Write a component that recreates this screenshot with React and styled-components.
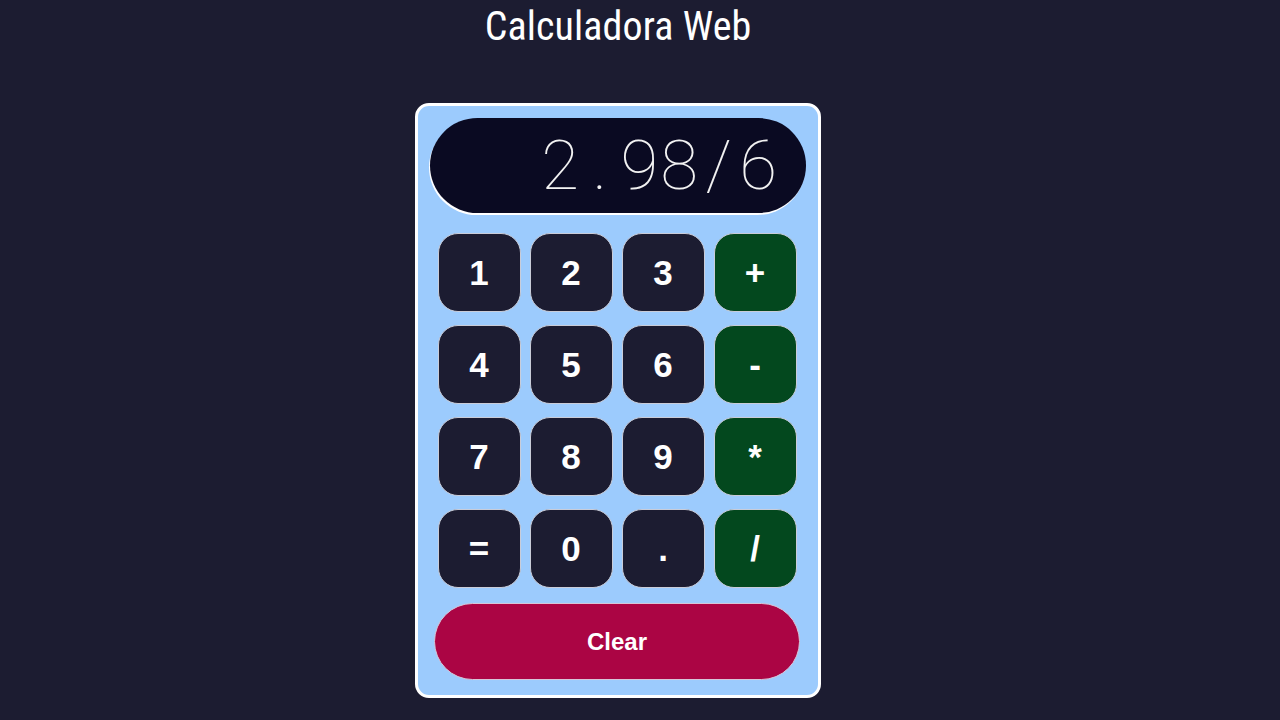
import React, { useState } from 'react';
import styled, { createGlobalStyle } from 'styled-components';

const GlobalStyle = createGlobalStyle`
  html, body {
    margin: 0;
    padding: 0;
    background-color: #1c1c31;
  }
  body {
    font-family: 'Liberation Sans', Arial, sans-serif;
    color: #ffffff;
  }
`;

const keys = [
  { label: '1' }, { label: '2' }, { label: '3' }, { label: '+', op: true },
  { label: '4' }, { label: '5' }, { label: '6' }, { label: '-', op: true },
  { label: '7' }, { label: '8' }, { label: '9' }, { label: '*', op: true },
  { label: '=' }, { label: '0' }, { label: '.' }, { label: '/', op: true },
];

const App = () => {
  const [value, setValue] = useState('2.98/6');

  const press = (label) => {
    if (label === '=') {
      try {
        // eslint-disable-next-line no-new-func
        setValue(String(Function(`return (${value})`)()));
      } catch (e) {
        setValue('Error');
      }
      return;
    }
    setValue(value + label);
  };

  return (
    <>
      <GlobalStyle />
      <Page>
        <Title>Calculadora Web</Title>
        <Card>
          <Display>
            {value.split('').map((ch, i) => (
              <Char key={i}>{ch}</Char>
            ))}
          </Display>
          <Keypad>
            {keys.map((k) => (
              <Key key={k.label} $op={k.op} onClick={() => press(k.label)}>
                {k.label}
              </Key>
            ))}
          </Keypad>
          <ClearButton onClick={() => setValue('')}>Clear</ClearButton>
        </Card>
      </Page>
    </>
  );
};

/* --- styles --- */
const Page = styled.div`
  width: 1236px;
  display: flex;
  flex-direction: column;
  align-items: center;
`;

const Title = styled.h1`
  margin: 0;
  height: 53px;
  line-height: 54px;
  font-family: 'Roboto Condensed', 'Liberation Sans Narrow', Roboto, sans-serif;
  font-weight: 400;
  font-size: 40px;
  letter-spacing: 0.1px;
  color: #ffffff;
`;

const Card = styled.div`
  margin-top: 50px;
  width: 400px;
  box-sizing: content-box;
  border: 3px solid #ffffff;
  border-radius: 14px;
  background: #9ccbfd;
  display: flex;
  flex-direction: column;
  align-items: center;
  padding: 12px 0 15px;
`;

const Display = styled.div`
  width: 376px;
  height: 95px;
  box-sizing: border-box;
  border-radius: 48px;
  background: #0a0a22;
  box-shadow: -1px 2px 0 #ffffff;
  display: flex;
  align-items: center;
  justify-content: flex-end;
  padding-right: 28px;
`;

const Char = styled.span`
  width: 39.6px;
  text-align: center;
  font-family: Roboto, 'Open Sans', sans-serif;
  font-weight: 100;
  font-size: 69px;
  line-height: 1;
  color: #f2f2f2;
`;

const Keypad = styled.div`
  margin-top: 20px;
  margin-right: 2px;
  display: grid;
  grid-template-columns: repeat(4, 83px);
  grid-auto-rows: 79px;
  column-gap: 9px;
  row-gap: 13px;
`;

const Key = styled.button`
  box-sizing: border-box;
  border: 1px solid #c9ccd8;
  border-radius: 20px;
  background: ${(p) => (p.$op ? '#03481e' : '#1c1c31')};
  color: #ffffff;
  font-family: 'Liberation Sans', Arial, sans-serif;
  font-weight: 700;
  font-size: 35px;
  padding: 0;
  cursor: pointer;
  display: flex;
  align-items: center;
  justify-content: center;
`;

const ClearButton = styled.button`
  margin-top: 15px;
  margin-right: 2px;
  width: 366px;
  height: 77px;
  box-sizing: border-box;
  border: 1px solid #d6c6d8;
  border-radius: 39px;
  background: #ab0544;
  color: #ffffff;
  font-family: 'Liberation Sans', Arial, sans-serif;
  font-weight: 700;
  font-size: 24px;
  cursor: pointer;
`;

export default App;
